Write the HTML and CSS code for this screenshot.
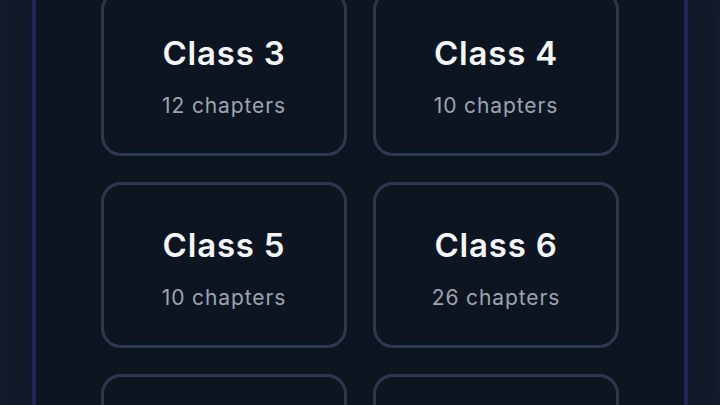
FILE: index.html
```html
<!DOCTYPE html>
<html lang="en">
<head>
    <meta charset="UTF-8">
    <meta name="viewport" content="width=device-width, initial-scale=1.0">
    <title>Classes</title>
    <link rel="stylesheet" href="styles.css">
</head>
<body>
<div class="app-shell">
    <!-- list of classes, scrolled part way down -->
    <div class="class-grid">
        <a class="class-card" href="#">
            <h3>Class 3</h3>
            <p>12 chapters</p>
        </a>
        <a class="class-card" href="#">
            <h3>Class 4</h3>
            <p>10 chapters</p>
        </a>
        <a class="class-card" href="#">
            <h3>Class 5</h3>
            <p>10 chapters</p>
        </a>
        <a class="class-card" href="#">
            <h3>Class 6</h3>
            <p>26 chapters</p>
        </a>
        <a class="class-card" href="#">
            <h3>Class 7</h3>
            <p>18 chapters</p>
        </a>
        <a class="class-card" href="#">
            <h3>Class 8</h3>
            <p>16 chapters</p>
        </a>
    </div>
</div>
</body>
</html>
```

FILE: styles.css
```css
html, body {
    margin: 0;
    height: 100%;
    overflow: hidden;
}

body {
    background: linear-gradient(90deg, #131a2a 0%, #101725 4%, #0f1622 50%, #101725 96%, #141b2b 100%);
    font-family: "Inter", "Noto Sans", sans-serif;
}

.app-shell {
    display: flow-root;
    width: 648px;
    height: 100%;
    margin: 0 auto;
    background: #0d1520;
    border-left: 4px solid #23245c;
    border-right: 4px solid #23245c;
    box-shadow: 0 0 24px rgba(40, 40, 110, 0.25);
}

.class-grid {
    width: 518px;
    margin: -10px auto 0;
    display: grid;
    grid-template-columns: 1fr 1fr;
    gap: 26px;
}

.class-card {
    box-sizing: border-box;
    height: 166px;
    padding-top: 41px;
    border: 3px solid #2c3a51;
    border-radius: 20px;
    background: #0d1520;
    text-align: center;
    text-decoration: none;
}

.class-card h3 {
    margin: 0 0 22px;
    font-size: 33px;
    line-height: 38px;
    font-weight: 600;
    letter-spacing: 0.8px;
    color: #f3f5f8;
}

.class-card p {
    margin: 0;
    font-size: 21px;
    line-height: 24px;
    letter-spacing: 0.9px;
    color: #9ba4b2;
}
```
